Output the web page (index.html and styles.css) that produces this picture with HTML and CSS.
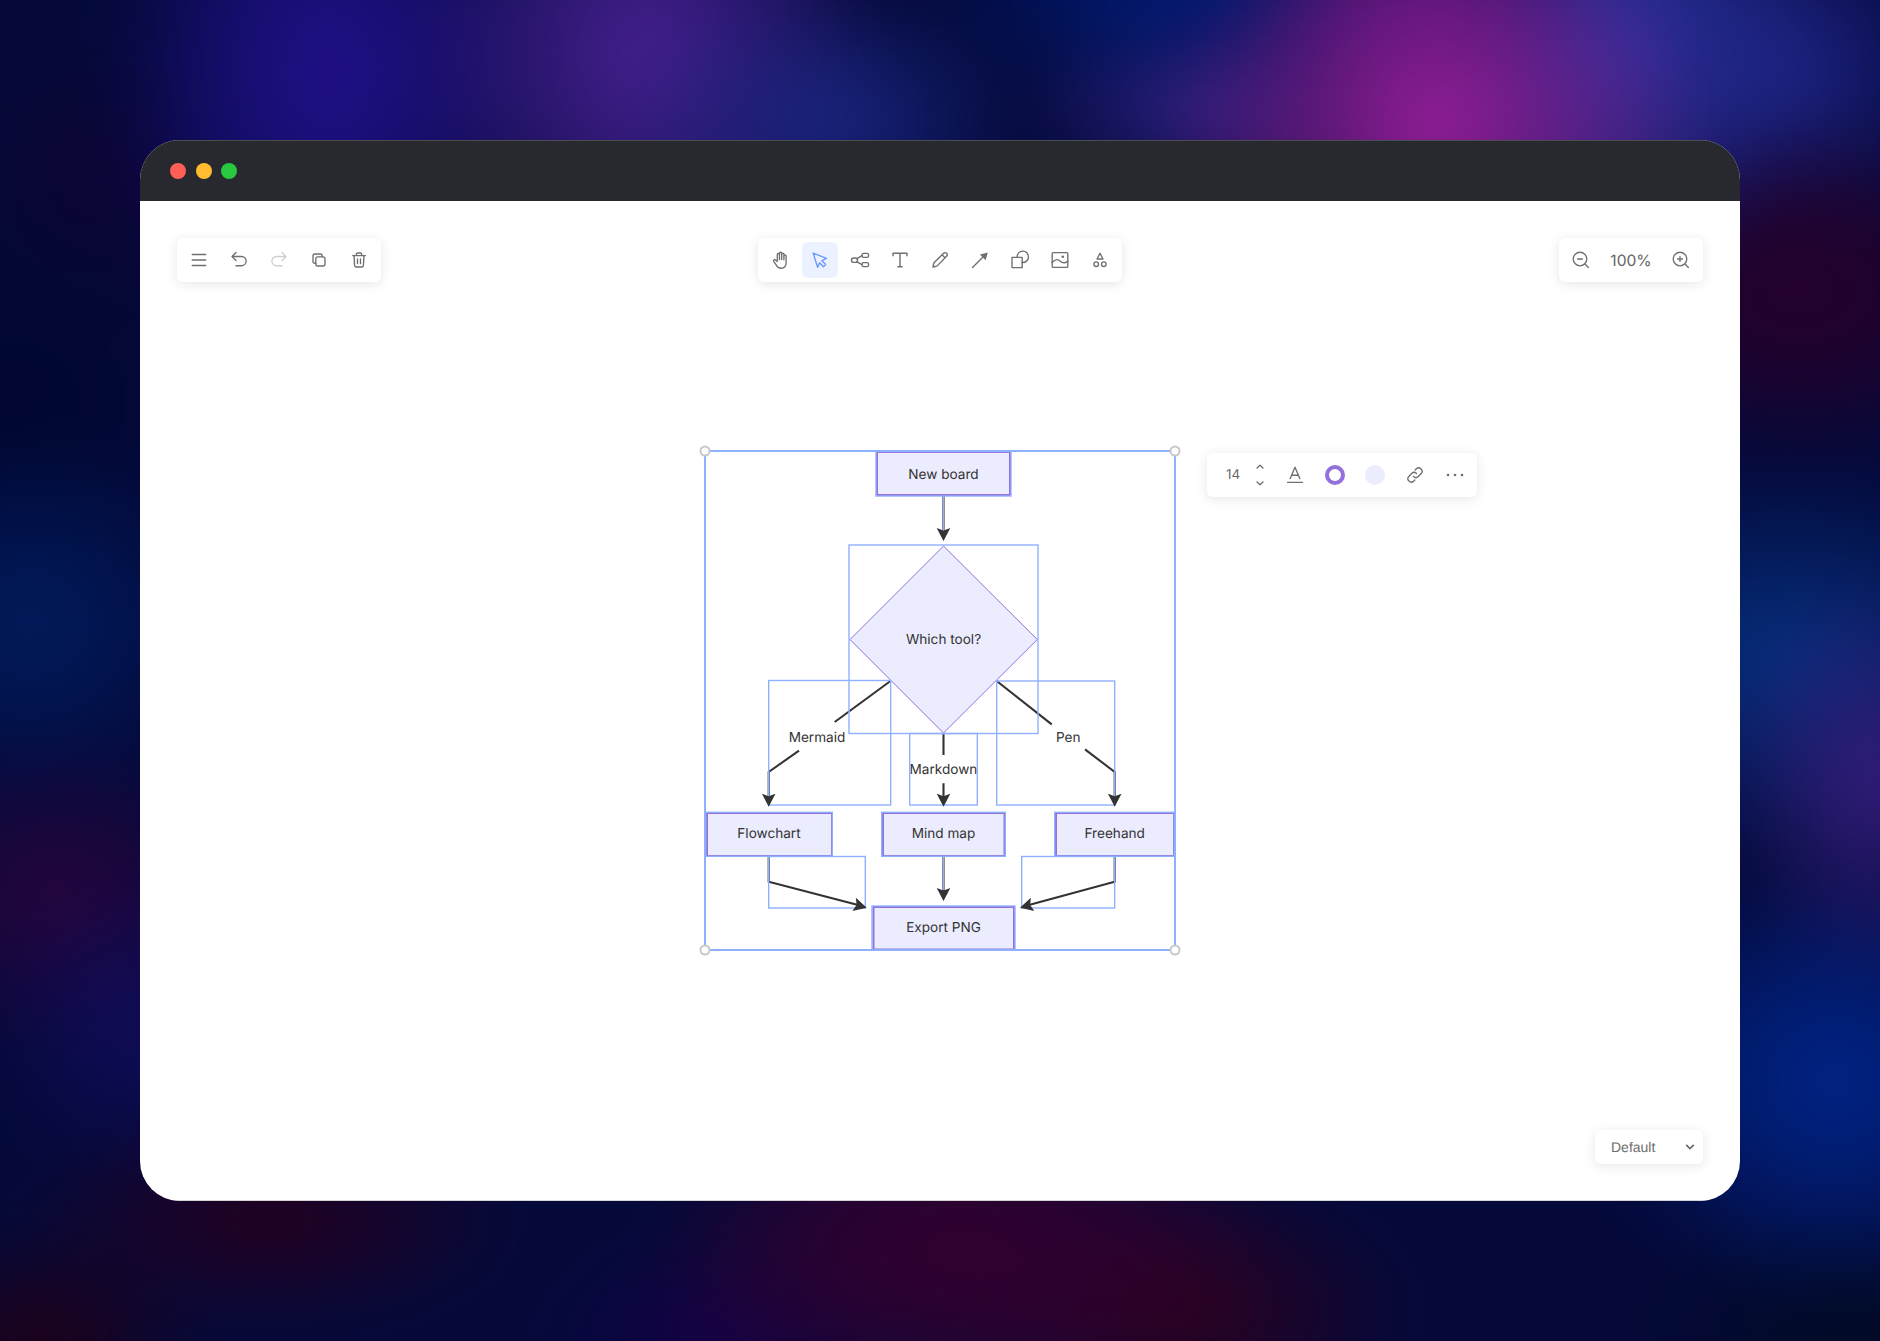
FILE: index.html
```html
<!DOCTYPE html>
<html lang="en">
<head>
    <meta charset="UTF-8">
    <meta name="viewport" content="width=device-width, initial-scale=1.0">
    <title>Whiteboard</title>
    <link rel="stylesheet" href="styles.css">
</head>
<body>
    <div class="window">
        <div class="titlebar">
            <span class="light red"></span>
            <span class="light yellow"></span>
            <span class="light green"></span>
        </div>

        <main class="canvas">
            <!-- Flowchart, drawn in page coordinates -->
            <svg class="diagram" viewBox="140 201 1600 999">
                <defs>
                    <path id="head" d="M0 0L-6.8-13L0-10.5L6.8-13Z"/>
                </defs>

                <g class="edges">
                    <path d="M943.5 496V530"/>
                    <path d="M890.5 681L834.7 722M799 750.7L768.7 772V800"/>
                    <path d="M943.5 733V755M943.5 783.3V800"/>
                    <path d="M996.7 681L1051.7 724.3M1085 749.3L1114.7 772V800"/>
                    <path d="M768.7 856V881.7L860 905.5"/>
                    <path d="M943.5 856V894"/>
                    <path d="M1114.7 856V881.7L1027 905.5"/>
                </g>

                <g class="nodes">
                    <rect x="877" y="452" width="133" height="43"/>
                    <polygon points="943.5,546 1037.3,639.5 943.5,733 850,639.5"/>
                    <rect x="707" y="813" width="125" height="43"/>
                    <rect x="883" y="813" width="121.5" height="43"/>
                    <rect x="1056" y="813" width="118" height="43"/>
                    <rect x="873.5" y="907" width="140.5" height="42.5"/>
                </g>

                <g class="labels">
                    <text x="943.5" y="474.5">New board</text>
                    <text x="943.5" y="640">Which tool?</text>
                    <text x="817" y="737.5">Mermaid</text>
                    <text x="1068.3" y="737.5">Pen</text>
                    <text x="943.5" y="770">Markdown</text>
                    <text x="769" y="834">Flowchart</text>
                    <text x="943.5" y="834">Mind map</text>
                    <text x="1114.7" y="834">Freehand</text>
                    <text x="943.5" y="928">Export PNG</text>
                </g>

                <g class="boxes">
                    <rect x="849" y="545" width="189" height="188.5"/>
                    <rect x="768.7" y="680.5" width="122" height="124.5"/>
                    <rect x="909.7" y="733.5" width="67.6" height="71.5"/>
                    <rect x="996.7" y="681" width="118" height="124"/>
                    <rect x="768.7" y="856.5" width="96.6" height="51.5"/>
                    <rect x="1021.7" y="856.5" width="93" height="51.5"/>
                    <rect x="876" y="451.5" width="135" height="44.5"/>
                    <rect x="705.7" y="812.3" width="126.6" height="44"/>
                    <rect x="881.7" y="812.3" width="123.6" height="44"/>
                    <rect x="1054.7" y="812.3" width="119.6" height="44"/>
                    <rect x="872" y="906" width="143" height="44"/>
                    <path d="M943.5 496V530M943.5 856V890"/>
                </g>

                <g class="heads">
                    <use href="#head" transform="translate(943.5 541)"/>
                    <use href="#head" transform="translate(768.7 806.7)"/>
                    <use href="#head" transform="translate(943.5 806.7)"/>
                    <use href="#head" transform="translate(1114.7 806.7)"/>
                    <use href="#head" transform="translate(943.5 901)"/>
                    <use href="#head" transform="translate(866.7 907.7) rotate(-75)"/>
                    <use href="#head" transform="translate(1020 907.7) rotate(75)"/>
                </g>

                <rect class="selection" x="705" y="451" width="470" height="499"/>
                <circle class="handle" cx="705" cy="451" r="4.5"/>
                <circle class="handle" cx="1175" cy="451" r="4.5"/>
                <circle class="handle" cx="705" cy="950" r="4.5"/>
                <circle class="handle" cx="1175" cy="950" r="4.5"/>
            </svg>

            <div class="top-row">
                <div class="toolbar left-bar">
                    <button class="tool"><svg viewBox="0 0 20 20"><path d="M3.2 4.5H16.8M3.2 10H16.8M3.2 15.5H16.8"/></svg></button>
                    <button class="tool"><svg viewBox="0 0 20 20"><path d="M7 2.5L3 6.5L7 10.5M3 6.5H12.5A4.6 4.6 0 0 1 12.5 15.7H7"/></svg></button>
                    <button class="tool muted"><svg viewBox="0 0 20 20"><path d="M13 2.5L17 6.5L13 10.5M17 6.5H7.5A4.6 4.6 0 0 0 7.5 15.7H13"/></svg></button>
                    <button class="tool"><svg viewBox="0 0 20 20"><rect x="6.8" y="6.8" width="9.2" height="9.2" rx="2"/><path d="M6.8 13.2H6A2 2 0 0 1 4 11.2V6A2 2 0 0 1 6 4H11.2A2 2 0 0 1 13.2 6V6.8"/></svg></button>
                    <button class="tool"><svg viewBox="0 0 20 20"><path d="M3.7 5.6H16.3M5 5.6L5.6 15.4A1.8 1.8 0 0 0 7.4 17H12.6A1.8 1.8 0 0 0 14.4 15.4L15 5.6M7.4 5.6V4A1 1 0 0 1 8.4 3H11.6A1 1 0 0 1 12.6 4V5.6M8.5 9V13.5M11.5 9V13.5"/></svg></button>
                </div>

                <div class="toolbar">
                    <button class="tool"><svg viewBox="0 0 20 20"><path d="M7.3 10.5V4.6A1.1 1.1 0 0 1 9.5 4.6V9.5M9.5 9.5V3.3A1.1 1.1 0 0 1 11.7 3.3V9.5M11.7 9.5V4.2A1.1 1.1 0 0 1 13.9 4.2V9.8M13.9 9.8V6A1.1 1.1 0 0 1 16.1 6V12.5C16.1 16 14.3 18.2 11.2 18.2C8.4 18.2 7.2 16.8 6 14.6L3.7 11.4C3 10.3 4.4 9 5.5 9.9L7.3 11.5"/></svg></button>
                    <button class="tool active"><svg viewBox="0 0 20 20"><path d="M3.2 3.2L16.5 8.4L11.8 10.6L15.6 14.6L13.4 16.8L9.6 12.8L7.6 17.2Z"/></svg></button>
                    <button class="tool"><svg viewBox="0 0 20 20"><rect x="1.5" y="8" width="6" height="4.4" rx="2.2"/><rect x="12" y="3.4" width="6.6" height="4" rx="1.6"/><rect x="12" y="12.6" width="6.6" height="4" rx="1.6"/><path d="M7 8.6L12 5.6M7 11.8L12 14.6"/></svg></button>
                    <button class="tool"><svg viewBox="0 0 20 20"><path d="M3 6.2V3.2H17V6.2M10 3.2V16.8M7.4 16.8H12.6" class="thick"/></svg></button>
                    <button class="tool"><svg viewBox="0 0 20 20"><path d="M3 17L3.8 13L13.6 3.2A1.7 1.7 0 0 1 16.6 6.2L6.9 16.1ZM12 4.8L15 7.8"/></svg></button>
                    <button class="tool"><svg viewBox="0 0 20 20"><path d="M2.5 17.5L13 7"/><path class="solid" d="M17.8 2.4L15.6 10.2L9.9 4.4Z"/></svg></button>
                    <button class="tool"><svg viewBox="0 0 20 20"><path d="M7 7.4H2V17.6H12.2V12.4"/><path d="M7 7.4H12.2V12.4"/><path d="M7.1 7.4A5.7 5.7 0 1 1 12.2 12.5"/></svg></button>
                    <button class="tool"><svg viewBox="0 0 20 20"><rect x="2.2" y="2.6" width="15.6" height="14.8" rx="1"/><path d="M2.2 12.5C5.5 8.8 8 9 10 11C12.5 13.5 15 13.5 17.8 11.2"/><circle class="solid" cx="12.8" cy="6.8" r="1.3"/></svg></button>
                    <button class="tool"><svg viewBox="0 0 20 20"><path d="M10 3.2L13 9H7Z"/><circle cx="6.2" cy="14.2" r="2.3"/><circle cx="13.8" cy="14.2" r="2.3"/></svg></button>
                </div>

                <div class="toolbar zoom-bar">
                    <button class="tool"><svg viewBox="0 0 20 20"><circle cx="9" cy="9" r="6.8"/><path d="M14 14L17.4 17.4M6.6 9H11.4"/></svg></button>
                    <span class="zoom-value">100%</span>
                    <button class="tool"><svg viewBox="0 0 20 20"><circle cx="9" cy="9" r="6.8"/><path d="M14 14L17.4 17.4M6.6 9H11.4M9 6.6V11.4"/></svg></button>
                </div>
            </div>

            <!-- Floating format bar next to the selection -->
            <div class="toolbar format-bar">
                <span class="font-size">14</span>
                <span class="stepper">
                    <svg viewBox="0 0 10 24"><path d="M2 5L5 2.2L8 5M2 19L5 21.8L8 19"/></svg>
                </span>
                <button class="tool"><svg viewBox="0 0 20 20"><path d="M5.2 13.6L10 2.2L14.8 13.6M6.6 10.2H13.4M2.5 17.3H17.5"/></svg></button>
                <button class="tool"><span class="ring"></span></button>
                <button class="tool"><span class="swatch"></span></button>
                <button class="tool"><svg viewBox="0 0 20 20"><path d="M8.5 11.5A3.4 3.4 0 0 0 13.3 11.5L16.2 8.6A3.4 3.4 0 0 0 11.4 3.8L10.2 5M11.5 8.5A3.4 3.4 0 0 0 6.7 8.5L3.8 11.4A3.4 3.4 0 0 0 8.6 16.2L9.8 15"/></svg></button>
                <button class="tool"><svg viewBox="0 0 20 20"><circle class="solid" cx="3" cy="10" r="1.3"/><circle class="solid" cx="10" cy="10" r="1.3"/><circle class="solid" cx="17" cy="10" r="1.3"/></svg></button>
            </div>

            <div class="bottom-row">
                <div class="theme-picker">
                    <span>Default</span>
                    <svg viewBox="0 0 10 8"><path d="M1.2 1.8L5 5.6L8.8 1.8"/></svg>
                </div>
            </div>
        </main>
    </div>
</body>
</html>
```

FILE: styles.css
```css
/* General Page Styling */
html, body {
    margin: 0;
    height: 100%;
}

body {
    display: flex;
    justify-content: center;
    padding-top: 140px;
    box-sizing: border-box;
    overflow: hidden;
    font-family: Inter, "Liberation Sans", sans-serif;
    text-rendering: geometricPrecision;
    background-color: #04093a;
}

/* Blurred colour blobs behind the window, overscanned 60px on every side */
body::before {
    content: "";
    position: fixed;
    left: -60px;
    top: -60px;
    width: 2000px;
    height: 1461px;
    filter: blur(28px);
    background-color: #04093a;
    background-image:
        radial-gradient(ellipse 280px 230px at 1495px 185px, #9a1f9c 0%, rgba(150, 31, 152, 0.6) 40%, transparent 100%),
        radial-gradient(ellipse 170px 130px at 1480px 60px, #4a1170 0%, transparent 100%),
        radial-gradient(ellipse 190px 260px at 1685px 90px, #28309c 0%, rgba(40, 48, 156, 0.6) 50%, transparent 100%),
        radial-gradient(ellipse 180px 90px at 1250px 170px, #2a2080 0%, transparent 100%),
        radial-gradient(ellipse 260px 130px at 1240px 50px, #001c78 0%, transparent 100%),
        radial-gradient(ellipse 200px 140px at 890px 180px, #1a2580 0%, transparent 100%),
        radial-gradient(ellipse 230px 270px at 705px 110px, #451f90 0%, rgba(69, 31, 144, 0.6) 50%, transparent 100%),
        radial-gradient(ellipse 220px 300px at 390px 130px, #20108a 0%, rgba(32, 16, 138, 0.6) 50%, transparent 100%),
        radial-gradient(ellipse 160px 200px at 1940px 840px, #351c7a 0%, transparent 100%),
        radial-gradient(ellipse 240px 220px at 1895px 1140px, #002488 0%, rgba(0, 36, 136, 0.6) 50%, transparent 100%),
        radial-gradient(ellipse 290px 200px at 1850px 720px, #053080 0%, transparent 100%),
        radial-gradient(ellipse 240px 170px at 1860px 350px, #26002a 0%, rgba(38, 0, 42, 0.7) 50%, transparent 100%),
        radial-gradient(ellipse 170px 180px at 1850px 130px, #1e2285 0%, transparent 100%),
        radial-gradient(ellipse 260px 150px at 1930px 1401px, #000a22 0%, transparent 100%),
        radial-gradient(ellipse 320px 170px at 1020px 1310px, #33002e 0%, rgba(51, 0, 46, 0.7) 50%, transparent 100%),
        radial-gradient(ellipse 240px 140px at 1240px 1370px, #2e001c 0%, transparent 100%),
        radial-gradient(ellipse 180px 110px at 780px 1401px, #160048 0%, transparent 100%),
        radial-gradient(ellipse 260px 110px at 330px 1280px, #26001e 0%, transparent 100%),
        radial-gradient(ellipse 170px 120px at 100px 1401px, #200016 0%, transparent 100%),
        radial-gradient(ellipse 140px 150px at 190px 1090px, #100c5a 0%, transparent 100%),
        radial-gradient(ellipse 200px 160px at 120px 960px, #28043e 0%, transparent 100%),
        radial-gradient(ellipse 200px 190px at 90px 680px, #001c5e 0%, transparent 100%),
        radial-gradient(ellipse 180px 260px at 80px 470px, #000630 0%, transparent 100%),
        radial-gradient(ellipse 150px 170px at 150px 250px, #0c0434 0%, transparent 100%);
}

/* App Window */
.window {
    position: relative;
    width: 1600px;
    height: 1061px;
    display: flex;
    flex-direction: column;
    border-radius: 40px;
    overflow: hidden;
    background: #fff;
}

.titlebar {
    height: 60px;
    flex-shrink: 0;
    display: flex;
    align-items: center;
    gap: 9.5px;
    padding-left: 30px;
    background: #28292e;
    border-top: 1px solid #4b4b52;
}

.light {
    width: 16px;
    height: 16px;
    border-radius: 50%;
}

.red { background: #ff5f57; }
.yellow { background: #febc2e; }
.green { background: #28c840; }

/* Canvas */
.canvas {
    position: relative;
    flex: 1;
    display: flex;
    flex-direction: column;
    justify-content: space-between;
    padding: 37px 37px 36px;
    border-bottom: 1px solid #d4d4d4;
}

.diagram {
    position: absolute;
    left: 0;
    top: 0;
    width: 1600px;
    height: 999px;
}

.edges path {
    fill: none;
    stroke: #333;
    stroke-width: 2.1;
}

.heads use {
    fill: #333;
}

.nodes rect {
    fill: #ececff;
    stroke: #9370db;
    stroke-width: 2;
}

.nodes polygon {
    fill: #ececff;
    stroke: #9370db;
    stroke-width: 1;
}

.labels text {
    font-family: Inter, sans-serif;
    font-size: 13.6px;
    fill: #333;
    text-anchor: middle;
    dominant-baseline: central;
}

.boxes rect,
.boxes path {
    fill: none;
    stroke: #8fb0ff;
    stroke-width: 1.4;
}

.boxes path {
    stroke-width: 1;
}

.selection {
    fill: none;
    stroke: #8fb0ff;
    stroke-width: 2;
}

.handle {
    fill: #fff;
    stroke: #c8c8c8;
    stroke-width: 2;
}

/* Toolbars */
.top-row,
.bottom-row {
    position: relative;
    display: grid;
    align-items: start;
}

.top-row {
    grid-template-columns: 1fr auto 1fr;
}

.bottom-row {
    justify-items: end;
}

.toolbar {
    display: inline-flex;
    align-items: center;
    height: 44px;
    padding: 0 2px;
    box-sizing: border-box;
    background: #fff;
    border-radius: 6px;
    box-shadow: 0 2px 12px rgba(0, 0, 0, 0.1);
}

.left-bar {
    justify-self: start;
}

.zoom-bar {
    justify-self: end;
}

.tool {
    width: 36px;
    height: 36px;
    margin: 0 2px;
    padding: 0;
    display: flex;
    align-items: center;
    justify-content: center;
    background: none;
    border: none;
    border-radius: 6px;
}

.tool svg {
    width: 20px;
    height: 20px;
}

.toolbar svg path,
.toolbar svg rect,
.toolbar svg circle {
    fill: none;
    stroke: #6f6f6f;
    stroke-width: 1.35;
    stroke-linecap: round;
    stroke-linejoin: round;
}

.toolbar svg .solid {
    fill: #6f6f6f;
    stroke: none;
}

.toolbar svg .thick {
    stroke-linecap: butt;
    stroke-width: 1.4;
}

.tool.muted svg path {
    stroke: #cfcfcf;
}

.tool.active {
    background: #ebf1ff;
}

.tool.active svg path {
    stroke: #6c9bff;
    stroke-width: 1.4;
}

.zoom-value {
    width: 60px;
    text-align: center;
    font-size: 15.6px;
    color: #666;
}

/* Format bar */
.format-bar {
    position: absolute;
    left: 1067px;
    top: 252px;
    width: 270px;
    padding-left: 18px;
}

.font-size {
    width: 16px;
    text-align: center;
    font-size: 13.5px;
    color: #666;
}

.stepper {
    margin: 0 10px 0 14px;
    display: flex;
}

.stepper svg {
    width: 10px;
    height: 24px;
}

.ring {
    width: 20px;
    height: 20px;
    box-sizing: border-box;
    border: 4.6px solid #9370db;
    border-radius: 50%;
}

.swatch {
    width: 20px;
    height: 20px;
    border-radius: 50%;
    background: #ececff;
}

/* Theme picker */
.theme-picker {
    display: flex;
    align-items: center;
    justify-content: space-between;
    width: 108px;
    height: 34px;
    padding: 0 8px 0 16px;
    box-sizing: border-box;
    background: #fff;
    border-radius: 6px;
    box-shadow: 0 2px 12px rgba(0, 0, 0, 0.1);
    font-family: "Liberation Sans", sans-serif;
    font-size: 14px;
    color: #6e6e6e;
}

.theme-picker svg {
    width: 10px;
    height: 8px;
}

.theme-picker path {
    fill: none;
    stroke: #6e6e6e;
    stroke-width: 1.8;
}
```
